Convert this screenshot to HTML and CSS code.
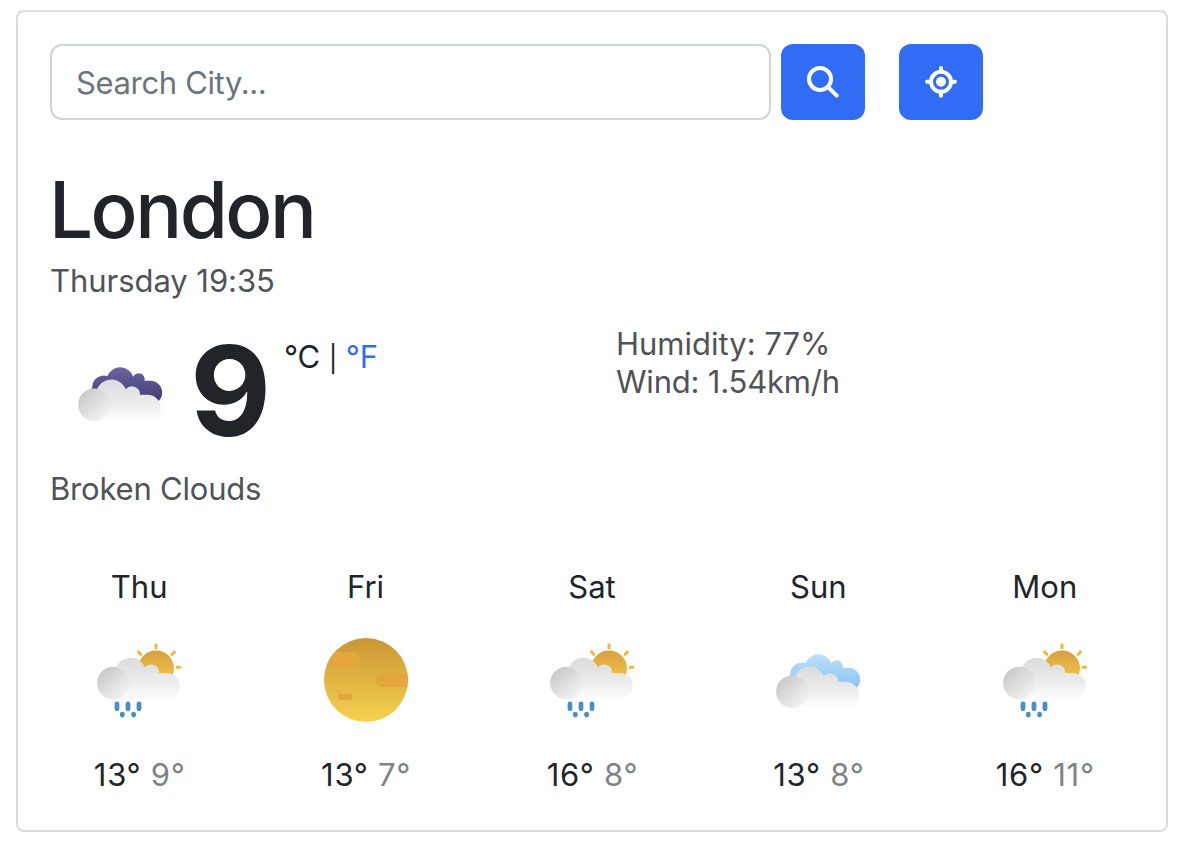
FILE: index.html
```html
<!DOCTYPE html>
<html lang="en">
<head>
<meta charset="utf-8">
<title>Weather</title>
<link rel="stylesheet" href="styles.css">
</head>
<body>
<svg class="defs" width="0" height="0" aria-hidden="true">
  <defs>
    <linearGradient id="g-cloud" gradientUnits="userSpaceOnUse" x1="0" y1="26" x2="0" y2="69"><stop offset="0" stop-color="#dadada"/><stop offset=".6" stop-color="#ececec"/><stop offset="1" stop-color="#fefefe"/></linearGradient>
    <linearGradient id="g-puff" gradientUnits="userSpaceOnUse" x1="15" y1="41" x2="36" y2="65"><stop offset="0" stop-color="#cbcbcb"/><stop offset="1" stop-color="#f3f3f3"/></linearGradient>
    <linearGradient id="g-sun" x1="0" y1="0" x2="0" y2="1"><stop offset="0" stop-color="#d8a040"/><stop offset="1" stop-color="#f5cd4a"/></linearGradient>
    <linearGradient id="g-disc" x1="0" y1="0" x2="0" y2="1"><stop offset="0" stop-color="#ca9636"/><stop offset="1" stop-color="#f7d24e"/></linearGradient>
    <linearGradient id="g-day" gradientUnits="userSpaceOnUse" x1="0" y1="23" x2="0" y2="61"><stop offset="0" stop-color="#c0e2fb"/><stop offset="1" stop-color="#82c0f1"/></linearGradient>
    <linearGradient id="g-night" gradientUnits="userSpaceOnUse" x1="0" y1="23" x2="0" y2="61"><stop offset="0" stop-color="#6e66a6"/><stop offset="1" stop-color="#41396f"/></linearGradient>
    <g id="cloud">
      <path fill="url(#g-cloud)" d="M24 69.3V43L26 41.5A15.5 15.5 0 0 1 55.8 37.5A8 8 0 0 1 70 43H77.7A13 13 0 0 1 77.7 69.3Z"/>
      <circle cx="24.3" cy="53" r="16.2" fill="url(#g-puff)"/>
    </g>
    <path id="back" d="M22.3 44A11.2 11.2 0 0 1 37.4 33.3A13.6 13.6 0 0 1 63.2 33.8A6 6 0 0 1 74.5 37.7H80.3A11.9 11.9 0 0 1 80.3 61.5H34A11.5 11.5 0 0 1 22.3 44Z"/>
    <symbol id="rain" viewBox="0 0 100 100">
      <circle cx="67" cy="38.4" r="18" fill="url(#g-sun)"/>
      <path d="M67 14.8V17.7M49.6 22L51.7 24.3M85.4 22L83.2 24.3M88.2 37.3H90.6" fill="none" stroke="#f7b543" stroke-width="3.1" stroke-linecap="round"/>
      <use href="#cloud"/>
      <path d="M28 74V78.8M39 74V78.8M50 74V78.8M33.3 84.1V85M44.6 84.1V85" fill="none" stroke="#4b8fc9" stroke-width="4.8" stroke-linecap="round"/>
    </symbol>
    <symbol id="cloudy" viewBox="0 0 100 100">
      <use href="#back" fill="url(#g-day)"/>
      <use href="#cloud" y="8.8"/>
    </symbol>
    <symbol id="cloudy-night" viewBox="0 0 100 100">
      <use href="#back" fill="url(#g-night)"/>
      <use href="#cloud" y="8.8"/>
    </symbol>
    <symbol id="clear" viewBox="0 0 100 100">
      <clipPath id="disc"><circle cx="50" cy="50" r="42"/></clipPath>
      <circle cx="50" cy="50" r="42" fill="url(#g-disc)"/>
      <g clip-path="url(#disc)" fill="#e4a63c">
        <rect x="0" y="22" width="44.7" height="14" rx="7"/>
        <rect x="59.7" y="42.7" width="50" height="14.3" rx="7"/>
        <rect x="21.7" y="63.7" width="14.6" height="6" rx="3"/>
      </g>
    </symbol>
  </defs>
</svg>
<main class="card">
  <form class="search">
    <input class="field" type="text" placeholder="Search City...">
    <button class="btn" type="button" aria-label="Search">
      <svg width="36" height="36" viewBox="0 0 36 36" fill="none" stroke="#fff" stroke-width="4" stroke-linecap="round"><circle cx="15" cy="15" r="11"/><path d="M23.5 23.5L31.7 31.7"/></svg>
    </button>
    <button class="btn locate" type="button" aria-label="Current location">
      <svg width="36" height="36" viewBox="0 0 36 36" fill="none" stroke="#fff" stroke-width="4"><circle cx="18" cy="17.8" r="10"/><circle cx="18" cy="17.8" r="5" fill="#fff" stroke="none"/><path stroke-linecap="round" d="M18 3.9V7M18 28.6V31.7M4.1 17.8H7M29 17.8H31.9"/></svg>
    </button>
  </form>
  <h1 class="city">London</h1>
  <p class="text time">Thursday 19:35</p>
  <section class="now">
    <div class="current">
      <svg class="icon" viewBox="0 0 100 100"><use href="#cloudy-night"/></svg>
      <strong class="degrees">9</strong>
      <span class="units">°C <span class="bar">|</span> <a class="unit-link">°F</a></span>
    </div>
    <div class="details">
      <p class="text humidity">Humidity: 77%</p>
      <p class="text wind">Wind: 1.54km/h</p>
    </div>
  </section>
  <p class="text summary">Broken Clouds</p>
  <section class="forecast">
    <div class="day"><span class="name">Thu</span><svg class="icon"><use href="#rain"/></svg><span class="temps">13° <span class="low">9°</span></span></div>
    <div class="day"><span class="name">Fri</span><svg class="icon"><use href="#clear"/></svg><span class="temps">13° <span class="low">7°</span></span></div>
    <div class="day"><span class="name">Sat</span><svg class="icon"><use href="#rain"/></svg><span class="temps">16° <span class="low">8°</span></span></div>
    <div class="day"><span class="name">Sun</span><svg class="icon"><use href="#cloudy"/></svg><span class="temps">13° <span class="low">8°</span></span></div>
    <div class="day"><span class="name">Mon</span><svg class="icon"><use href="#rain"/></svg><span class="temps">16° <span class="low">11°</span></span></div>
  </section>
</main>
</body>
</html>
```
FILE: styles.css
```css
* { box-sizing: border-box; }
body {
  margin: 0;
  padding: 10px 16px;
  background: #fff;
  color: #212529;
  font: 400 31px/38px Inter, "Liberation Sans", sans-serif;
}
h1, p { margin: 0; }
.defs { display: block; height: 0; }
.card {
  height: 822px;
  padding: 32px;
  border: 2px solid #dcdce0;
  border-radius: 8px;
}
.search { display: flex; height: 76px; }
.field {
  width: 721px;
  padding: 2px 24px 0;
  border: 2px solid #ced4da;
  border-radius: 12px;
  background: #fff;
  font: inherit;
  letter-spacing: -0.35px;
}
.field::placeholder { color: #6c757d; opacity: 1; }
.btn {
  display: flex;
  align-items: center;
  justify-content: center;
  width: 84px;
  margin-left: 10px;
  padding: 0;
  border: 0;
  border-radius: 12px;
  background: #316cf4;
}
.locate { margin-left: 34px; }
.city {
  margin-top: 42px;
  margin-left: -1px;
  font-size: 78px;
  line-height: 96px;
  font-weight: 500;
  letter-spacing: -2.5px;
}
.text { color: #505357; }
.time { margin-top: 4px; letter-spacing: -0.05px; }
.now {
  display: grid;
  grid-template-columns: 566px 1fr;
  height: 144px;
  margin-top: 25px;
}
.current { display: flex; align-items: flex-start; }
.icon { display: block; flex: none; width: 100px; height: 100px; }
.current .icon { margin: 18px 20px 0; }
.degrees {
  width: 83px;
  font-size: 125px;
  line-height: 132px;
  font-weight: 750;
}
.units { margin: 13px 0 0 11px; letter-spacing: -0.15px; }
.bar { font-size: 26px; }
.unit-link { color: #316cf4; }
.wind { letter-spacing: -0.2px; }
.summary { margin-top: 1px; letter-spacing: -0.2px; }
.forecast {
  display: grid;
  grid-template-columns: repeat(5, 1fr);
  margin: 60px -24px 0;
}
.day { display: flex; flex-direction: column; align-items: center; }
.day .icon { margin: 24px 0 26px; }
.temps { padding-left: 1px; letter-spacing: 0.7px; }
.low { color: #808286; }
```
